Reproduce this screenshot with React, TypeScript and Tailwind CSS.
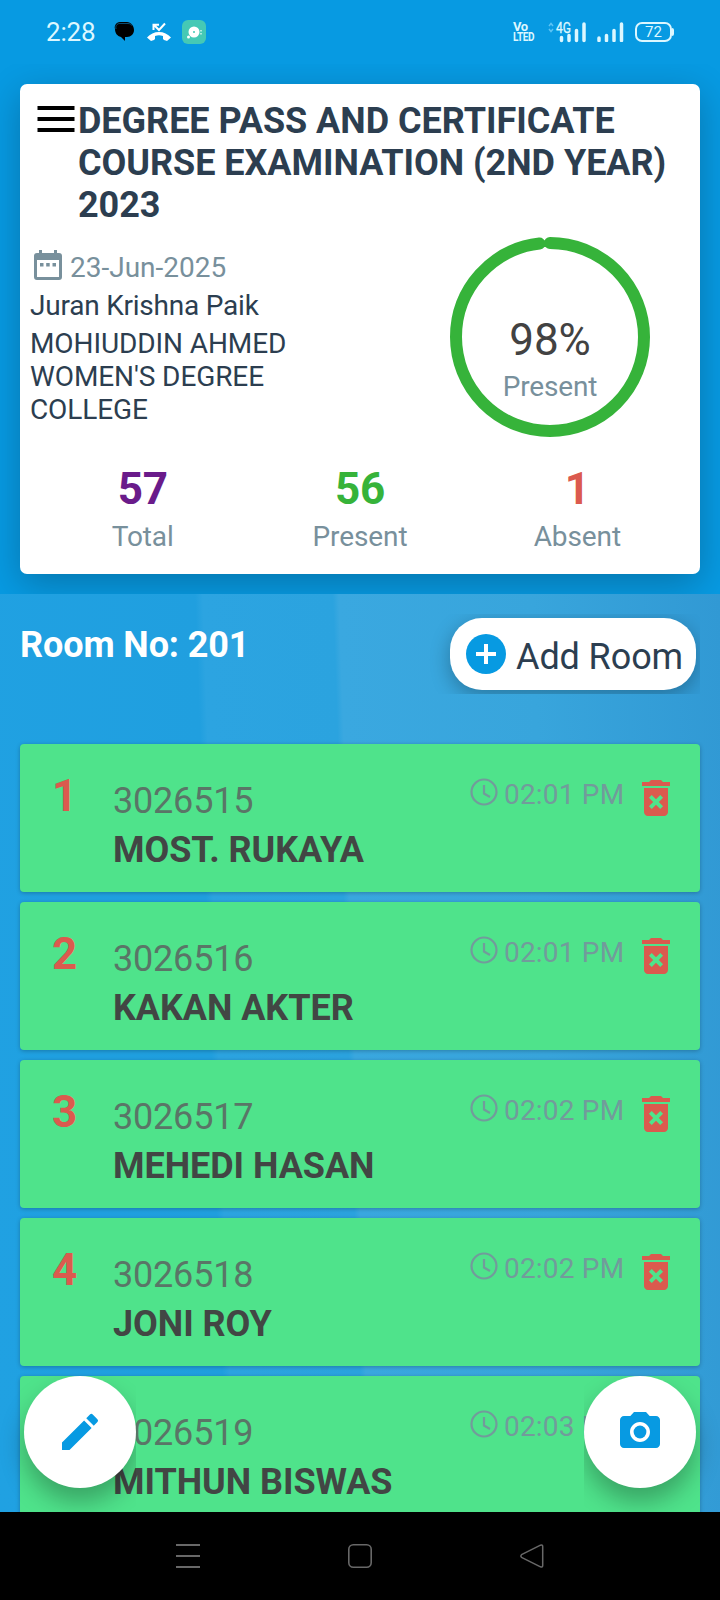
import React from 'react';
import { MdCameraAlt, MdDeleteForever, MdEdit } from 'react-icons/md';

interface Student {
  serial: number;
  roll: string;
  name: string;
  time: string;
}

const students: Student[] = [
  { serial: 1, roll: '3026515', name: 'MOST. RUKAYA', time: '02:01 PM' },
  { serial: 2, roll: '3026516', name: 'KAKAN AKTER', time: '02:01 PM' },
  { serial: 3, roll: '3026517', name: 'MEHEDI HASAN', time: '02:02 PM' },
  { serial: 4, roll: '3026518', name: 'JONI ROY', time: '02:02 PM' },
  { serial: 5, roll: '3026519', name: 'MITHUN BISWAS', time: '02:03 PM' },
];

function StatusBar() {
  return (
    <header className="flex h-16 items-center justify-between pl-[46px] pr-[46px] text-[#dcf7ff]">
      <div className="flex items-center">
        <span className="w-[68px] text-[26px] leading-8 tracking-[-0.2px]">2:28</span>
        <svg className="h-5 w-5" viewBox="0 0 20 20">
          <path d="M6 0h7c4 0 7 4 7 8s-3 7-7 7h-2v4l-4-4C3 14 1 11 1 7 0 4 2 0 6 0z" fill="#000" />
          <path d="M2 7C1 3 4 1 7 1.500h7c2 0 3 1 4 2" fill="none" stroke="#0b6fa5" strokeWidth="0.700" />
        </svg>
        <svg className="ml-[13px] h-6 w-6" viewBox="0 0 24 24" fill="#fff">
          <path d="M0 17.500C6 10 18 10 24 17.500L20 21c-2-.5-3-1-4-2v-3c-3-1-5-1-8 0v3c-1 1-2 1.500-4 2z" />
          <path d="M6.500 10V4.800H12M7 5l5 5 6-6.500" fill="none" stroke="#fff" strokeWidth="2" />
        </svg>
        <svg className="ml-[11px] h-6 w-6" viewBox="0 0 24 24">
          <rect width="24" height="24" rx="6" fill="#45c9b5" />
          <circle cx="12" cy="12" r="5.500" fill="#fff" />
          <circle cx="12" cy="12" r="1" fill="#45c9b5" />
          <circle cx="6.500" cy="17" r="1.500" fill="#fff" />
          <path d="M19 10v1.500M19 13v1.500" stroke="#d3f5ee" strokeWidth="1.500" />
        </svg>
      </div>
      <div className="flex items-center">
        <div className="flex w-6 flex-col text-[13px] font-bold leading-[10px] tracking-[-0.5px]">
          <span>Vo</span>
          <span className="origin-left scale-x-[0.77]">LTED</span>
        </div>
        <svg className="ml-[11px] h-5 w-[38px] overflow-visible" viewBox="0 0 38 20">
          <path d="M1 4l2-2.500L5 4M1 7l2 2.500L5 7" fill="none" stroke="#5cc4f5" strokeWidth="1.500" />
          <text x="8" y="11" fontSize="14" fill="#dcf7ff" stroke="#dcf7ff" strokeWidth="0.300" textLength="15" lengthAdjust="spacingAndGlyphs">
            4G
          </text>
          <path d="M13.500 15.500v3M21 13.500v5M28.500 8.500v10M36 2v16.500" stroke="#dcf7ff" strokeWidth="3.500" strokeLinecap="round" />
        </svg>
        <svg className="ml-[11px] h-5 w-[27px]" viewBox="0 0 27 20">
          <path d="M2 16v2.500M9.500 13.500v5M17 8.500v10M24.500 2v16.500" stroke="#dcf7ff" strokeWidth="3.500" strokeLinecap="round" />
        </svg>
        <div className="ml-[11px] flex h-5 w-[37px] items-center justify-center rounded-[7px] border-2 border-[#dcf7ff] text-[15px] leading-none">
          72
        </div>
        <div className="h-2 w-[2px] rounded-r bg-[#dcf7ff]" />
      </div>
    </header>
  );
}

function ProgressRing() {
  return (
    <div className="grid h-[200px] w-[200px] place-items-center">
      <svg className="col-start-1 row-start-1 h-[200px] w-[200px]" viewBox="0 0 200 200">
        <circle
          cx="100"
          cy="100"
          r="94"
          fill="none"
          stroke="#36b33a"
          strokeWidth="12"
          strokeLinecap="round"
          pathLength="1000"
          strokeDasharray="982 1000"
          transform="rotate(-90 100 100)"
        />
      </svg>
      <div className="col-start-1 row-start-1 pt-[42px] text-center">
        <p className="text-[44px] leading-[52px] text-[#424242]">98%</p>
        <p className="mt-1 text-[28px] leading-[33px] tracking-[-0.15px] text-[#78909c]">Present</p>
      </div>
    </div>
  );
}

function Stat({ value, label, className }: { value: number; label: string; className: string }) {
  return (
    <div className="text-center">
      <p className={`text-[44px] font-bold leading-[52px] tracking-[-0.3px] ${className}`}>{value}</p>
      <p className="mt-[5px] text-[28px] leading-[33px] tracking-[-0.1px] text-[#78909c]">{label}</p>
    </div>
  );
}

function SummaryCard() {
  return (
    <section className="h-[530px] overflow-hidden px-5 pt-5">
      <div className="h-[490px] rounded-[7px] bg-white shadow-[0_10px_36px_rgba(0,0,0,0.24)]">
        <div className="flex pl-[17px] pt-4">
          <svg className="mt-[6px] h-[26px] w-[38px] shrink-0" viewBox="0 0 38 26">
            <path d="M.5 2h37M.5 13h37M.5 24h37" stroke="#000" strokeWidth="4" />
          </svg>
          <h1 className="ml-[3px] w-[600px] text-[36px] font-bold leading-[42px] tracking-[-0.03px] text-[#2c3e50]">
            DEGREE PASS AND CERTIFICATE COURSE EXAMINATION (2ND YEAR) 2023
          </h1>
        </div>
        <div className="mt-[11px] flex h-[200px] justify-between pl-[10px] pr-[50px]">
          <div className="w-[310px] pt-[14px] text-[28px] leading-[33px] text-[#2c3e50]">
            <div className="flex text-[#78909c]">
              <svg className="ml-1 mt-[-1px] h-[30px] w-7 shrink-0" viewBox="0 0 28 30" fill="currentColor">
                <path
                  fillRule="evenodd"
                  d="M5 0h3v3h12V0h3v3h2q3 0 3 3v21q0 3-3 3H3q-3 0-3-3V6q0-3 3-3h2V0zM3 10v17h22V10H3z"
                />
                <path d="M6 13h3.500v3.500H6zM12.200 13h3.500v3.500h-3.500zM18.500 13H22v3.500h-3.500z" />
              </svg>
              <span className="ml-2">23-Jun-2025</span>
            </div>
            <p className="mt-[5px] tracking-[-0.22px]">Juran Krishna Paik</p>
            <p className="mt-[5px] tracking-[-0.1px]">MOHIUDDIN AHMED WOMEN&apos;S DEGREE COLLEGE</p>
          </div>
          <ProgressRing />
        </div>
        <div className="mt-[26px] grid grid-cols-3 px-[14px]">
          <Stat value={57} label="Total" className="text-[#6a1b8a]" />
          <Stat value={56} label="Present" className="text-[#36b33a]" />
          <Stat value={1} label="Absent" className="text-[#db5a4e]" />
        </div>
      </div>
    </section>
  );
}

function StudentRow({ serial, roll, name, time }: Student) {
  return (
    <li className="flex h-[148px] shrink-0 rounded bg-[#4fe38b] shadow-[0_1px_4px_rgba(0,0,0,0.25)]">
      <span className="w-[93px] pl-8 pt-[26px] text-[44px] font-bold leading-[52px] text-[#db5a4e]">{serial}</span>
      <div className="flex-1 pt-9 text-[36px] leading-[42px]">
        <p className="tracking-[-0.2px] text-[#5a7567]">{roll}</p>
        <p className="mt-[7px] font-bold tracking-[-0.05px] text-[#424644]">{name}</p>
      </div>
      <div className="flex pr-5 pt-[30px] text-[#729b9b]">
        <svg className="mt-1 h-7 w-7" viewBox="0 0 28 28" fill="none" stroke="currentColor" strokeWidth="2.200">
          <circle cx="14" cy="14" r="12.500" />
          <path d="M14 7v8.500l6 3.500" />
        </svg>
        <span className="ml-[6px] mt-1 w-[128px] whitespace-nowrap text-[28px] leading-[33px] tracking-[0.2px]">
          {time}
        </span>
        <MdDeleteForever className="h-12 w-12 text-[#db5a4e]" />
      </div>
    </li>
  );
}

function NavBar() {
  return (
    <nav className="flex h-[88px] items-center justify-between bg-black px-[176px] text-[#686868]">
      <svg className="h-6 w-6" viewBox="0 0 24 24" stroke="currentColor" strokeWidth="2">
        <path d="M0 1h24M0 12h24M0 23h24" />
      </svg>
      <svg className="h-6 w-6" viewBox="0 0 24 24" fill="none" stroke="currentColor" strokeWidth="1.600">
        <rect x="0.800" y="0.800" width="22.400" height="22.400" rx="4.500" />
      </svg>
      <svg className="h-6 w-6" viewBox="0 0 24 24" fill="none" stroke="currentColor" strokeWidth="1.500" strokeLinejoin="round">
        <path d="M1.500 10.700 20.500 1.200q2.200-.8 2.200 1.400v18.800q0 2.200-2.200 1.400L1.500 13.300q-1.300-1.300 0-2.600z" />
      </svg>
    </nav>
  );
}

export default function App() {
  return (
    <div className="relative flex h-[1600px] w-[720px] flex-col overflow-hidden bg-[#079ae2] font-['Roboto',sans-serif]">
      <StatusBar />
      <SummaryCard />
      <main className="h-[918px] overflow-hidden bg-[linear-gradient(88deg,#20a1e2_0%,#209fdf_30.2%,#2ca4e1_31.2%,#2ba3df_48.5%,#3aa8e0_49.3%,#38a5dc_75%,#3199d4_100%)]">
        <div className="flex h-[150px] justify-between pl-5 pr-5">
          <h2 className="mt-[30px] text-[36px] font-bold leading-[42px] tracking-[-0.1px] text-white">Room No: 201</h2>
          <div className="mt-5 h-20 overflow-hidden pl-6 pr-1 pt-1">
            <button className="flex h-[72px] w-[246px] items-center rounded-[32px] bg-white pl-4 text-[36px] text-[#2c3e50] shadow-[0_6px_20px_rgba(0,0,0,0.28)]">
              <svg className="h-10 w-10" viewBox="0 0 40 40">
                <circle cx="20" cy="20" r="20" fill="#079ae2" />
                <path d="M20 10v20M10 20h20" stroke="#fff" strokeWidth="4" />
              </svg>
              <span className="ml-[10px] mt-[6px] whitespace-nowrap leading-[42px] tracking-[-0.1px]">Add Room</span>
            </button>
          </div>
        </div>
        <ul className="flex flex-col gap-[10px] px-5">
          {students.map((student) => (
            <StudentRow key={student.serial} {...student} />
          ))}
        </ul>
      </main>
      <NavBar />
      {/* Floating actions, their shadows stop at the nav bar */}
      <div className="pointer-events-none absolute inset-x-0 bottom-[88px] flex justify-between">
        <div className="overflow-hidden pb-6 pl-6">
          <button className="grid h-28 w-28 place-items-center rounded-full bg-white text-[#079ae2] shadow-[0_14px_24px_rgba(0,0,0,0.28)]">
            <MdEdit className="h-12 w-12" />
          </button>
        </div>
        <div className="overflow-hidden pb-6 pr-6">
          <button className="grid h-28 w-28 place-items-center rounded-full bg-white text-[#079ae2] shadow-[0_14px_24px_rgba(0,0,0,0.28)]">
            <MdCameraAlt className="h-12 w-12" />
          </button>
        </div>
      </div>
    </div>
  );
}
